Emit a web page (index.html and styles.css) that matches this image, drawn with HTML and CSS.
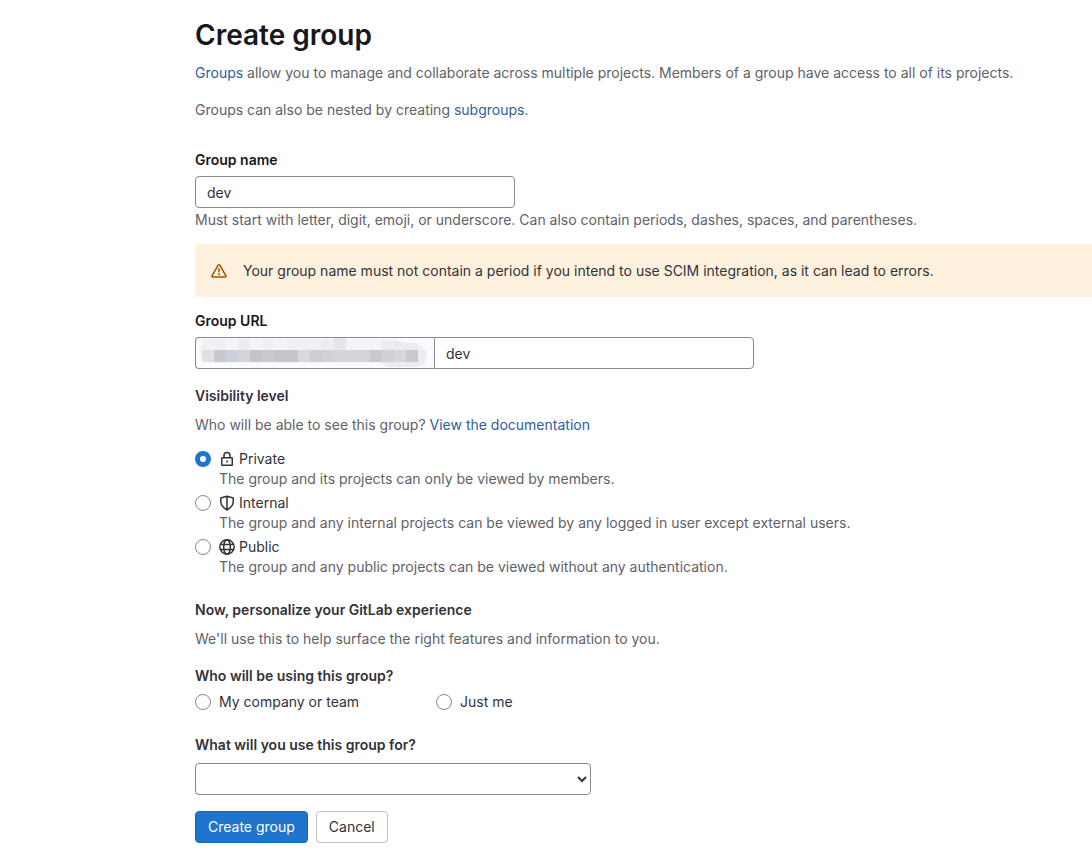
FILE: index.html
```html
<!DOCTYPE html>
<html lang="en">
<head>
<meta charset="utf-8">
<meta name="viewport" content="width=device-width, initial-scale=1">
<title>Create group</title>
<link rel="stylesheet" href="styles.css">
</head>
<body>
<main class="page">
  <header class="intro">
    <h1 class="title">Create group</h1>
    <p class="lead"><a class="link" href="#groups">Groups</a> allow you to manage and collaborate across multiple projects. Members of a group have access to all of its projects.</p>
    <p class="lead">Groups can also be nested by creating <a class="link" href="#subgroups">subgroups</a>.</p>
  </header>
  <form class="form">
    <div class="field">
      <label class="label strong" for="name">Group name</label>
      <input class="control name-input" id="name" type="text" value="dev">
      <p class="help name-help">Must start with letter, digit, emoji, or underscore. Can also contain periods, dashes, spaces, and parentheses.</p>
    </div>
    <div class="alert" role="alert">
      <svg class="icon alert-icon" viewBox="0 0 16 16" aria-hidden="true">
        <path d="M7.13 2.2a1 1 0 0 1 1.74 0l6.1 10.6a.8.8 0 0 1-.7 1.2H1.73a.8.8 0 0 1-.7-1.2z" fill="none" stroke="currentColor" stroke-width="1.5" stroke-linejoin="round"/>
        <path d="M8 5.75v3" fill="none" stroke="currentColor" stroke-width="1.5" stroke-linecap="round"/>
        <circle cx="8" cy="11.25" r="1" fill="currentColor"/>
      </svg>
      <p class="alert-text">Your group name must not contain a period if you intend to use SCIM integration, as it can lead to errors.</p>
    </div>
    <div class="field">
      <label class="label strong" for="url">Group URL</label>
      <div class="input-group">
        <span class="prefix">
          <svg class="mosaic" viewBox="0 0 238 30" aria-hidden="true">
            <path d="M15 1H194C202 1 205 5 214 5C226 5 231 10 231 18C231 27 225 29 216 29H198C190 29 187 25 179 25H16C8 25 3 20 3 13S8 1 15 1Z" fill="#f4f3f7"/>
            <path d="M198 1Q202 4 212 5H222V12H231Q232 29 216 29H198Q190 29 186 26V24H222V12H198Z" fill="#ececf0"/>
            <path d="M6 1h24v11H6zM66 1h12v11H66zM90 1h36v11H90z" fill="#f1f0f4"/>
            <path d="M42 1h12v11H42zM126 1h12v11h-12z" fill="#ededf1"/>
            <path d="M138 0h12v12h-12z" fill="#e8e5ea"/>
            <path d="M186 3h18v9h-18z" fill="#ebeaee"/>
            <path d="M6 12h12v12H6z" fill="#e4dfe3"/>
            <path d="M18 12h12v12H18z" fill="#c9c8cc"/>
            <path d="M30 12h12v12H30z" fill="#cecdd4"/>
            <path d="M42 12h0.500v12H42z" fill="#cbd0dd"/>
            <path d="M30 12h12v12H30z" fill="#cbcfdd"/>
            <path d="M42 12h12v12H42z" fill="#d6d4d9"/>
            <path d="M54 12h12v12H54z" fill="#c6c4ca"/>
            <path d="M66 12h12v12H66z" fill="#cbc8d0"/>
            <path d="M78 12h24v12H78z" fill="#c6c5ca"/>
            <path d="M102 12h12v12h-12z" fill="#d9d8dc"/>
            <path d="M114 12h12v12h-12z" fill="#cecdd2"/>
            <path d="M126 12h12v12h-12z" fill="#d3d1d5"/>
            <path d="M138 12h36v12h-36z" fill="#d5d4d9"/>
            <path d="M174 12h12v12h-12z" fill="#c9cad0"/>
            <path d="M186 12h12v12h-12z" fill="#d0d0d5"/>
            <path d="M198 12h12v12h-12z" fill="#dad6d8"/>
            <path d="M210 12h12v12h-12z" fill="#c8cacf"/>
          </svg>
        </span>
        <input class="control url-input" id="url" type="text" value="dev">
      </div>
    </div>
    <fieldset class="fieldset visibility">
      <legend class="label">Visibility level</legend>
      <p class="help vis-help">Who will be able to see this group? <a class="link" href="#docs">View the documentation</a></p>
      <div class="option">
        <input class="radio" type="radio" name="visibility" id="private" checked>
        <label class="option-label" for="private">
          <svg class="icon" viewBox="0 0 16 16" fill="none" stroke="currentColor" stroke-width="1.5" aria-hidden="true"><rect x="2.750" y="6.750" width="10.500" height="7.500" rx=".5"/><path d="M5 6.500V4.500a3 3 0 0 1 6 0v2"/><path d="M8 9.500v2"/></svg>
          Private</label>
        <p class="help option-help">The group and its projects can only be viewed by members.</p>
      </div>
      <div class="option">
        <input class="radio" type="radio" name="visibility" id="internal">
        <label class="option-label" for="internal">
          <svg class="icon" viewBox="0 0 16 16" fill="none" stroke="currentColor" stroke-width="1.5" stroke-linejoin="round" aria-hidden="true"><path d="M8 1.200 14.250 3v3.500c0 3.500-2 6-6.250 8.500-4.250-2.500-6.250-5-6.250-8.500V3zM8 1.200V15"/></svg>
          Internal</label>
        <p class="help option-help">The group and any internal projects can be viewed by any logged in user except external users.</p>
      </div>
      <div class="option">
        <input class="radio" type="radio" name="visibility" id="public">
        <label class="option-label" for="public">
          <svg class="icon" viewBox="0 0 16 16" fill="none" stroke="currentColor" stroke-width="1.500" aria-hidden="true"><circle cx="8" cy="8" r="7.200"/><ellipse cx="8" cy="8" rx="3.300" ry="7.200"/><path d="M1.500 5.500h13M1.500 10.500h13"/></svg>
          Public</label>
        <p class="help option-help">The group and any public projects can be viewed without any authentication.</p>
      </div>
    </fieldset>
    <section class="personalize">
      <h2 class="label">Now, personalize your GitLab experience</h2>
      <p class="help">We'll use this to help surface the right features and information to you.</p>
    </section>
    <fieldset class="fieldset users">
      <legend class="label">Who will be using this group?</legend>
      <div class="choices">
        <div class="option"><input class="radio" type="radio" name="users" id="team"><label class="option-label" for="team">My company or team</label></div>
        <div class="option"><input class="radio" type="radio" name="users" id="me"><label class="option-label" for="me">Just me</label></div>
      </div>
    </fieldset>
    <div class="field purpose">
      <label class="label" for="purpose">What will you use this group for?</label>
      <div class="select-wrap">
        <select class="control select" id="purpose"><option></option></select>
        <svg class="chevron" viewBox="0 0 10 8" aria-hidden="true"><path d="M1 2l4 4 4-4" fill="none" stroke="currentColor" stroke-width="2"/></svg>
      </div>
    </div>
    <div class="actions">
      <button class="button primary" type="submit">Create group</button>
      <button class="button" type="button">Cancel</button>
    </div>
  </form>
</main>
</body>
</html>
```
FILE: styles.css
```css
* { box-sizing: border-box; }
body {
  margin: 0;
  background: #fff;
  color: #333238;
  font: 14px/20px Inter, "Noto Sans", sans-serif;
}
h1, h2, p { margin: 0; }
.page { padding: 17px 0 10px 195px; }
.title { font-size: 28px; line-height: 36px; font-weight: 600; color: #18171d; }
.intro { display: flex; flex-direction: column; }
.lead { color: #626168; padding-top: 10px; }
.lead + .lead { padding-top: 17px; }
.link { color: #2f5ca0; text-decoration: none; }
.link:hover { text-decoration: underline; }
.form { padding-top: 30px; }
.field { display: flex; flex-direction: column; align-items: flex-start; gap: 6px; }
.label { display: block; padding: 0; font-size: 14px; line-height: 20px; font-weight: 600; color: #333238; }
.strong { color: #18171d; }
.help { color: #626168; }
.control {
  height: 32px;
  padding: 0 11px;
  border: 1px solid #89888d;
  border-radius: 4px;
  background: #fff;
  color: #333238;
  font: inherit;
}
.name-input { width: 100%; max-width: 320px; }
.name-help { margin-top: -4px; }
.alert {
  display: flex;
  gap: 16px;
  align-items: center;
  margin: 14px 0;
  padding: 16px;
  min-height: 53px;
  border-radius: 4px 0 0 4px;
  background: #fdf1dd;
}
.icon { flex: none; width: 16px; height: 16px; }
.alert-icon { color: #9e5400; }
.input-group { display: flex; width: 100%; max-width: 559px; }
.prefix {
  flex: 0 0 239px;
  border: 1px solid #89888d;
  border-right: 0;
  border-radius: 4px 0 0 4px;
  background: #fbfafd;
}
.mosaic { display: block; width: 238px; height: 30px; }
.url-input { flex: 1; min-width: 0; border-radius: 0 4px 4px 0; }
.fieldset { min-width: 0; margin: 0; padding: 0; border: 0; }
.visibility { margin-top: 17px; }
.vis-help { padding: 9px 0 14px; }
.option { display: grid; grid-template-columns: 16px auto; column-gap: 8px; align-items: center; justify-content: start; }
.visibility .option + .option { margin-top: 4px; }
.option-label { display: flex; align-items: center; gap: 4px; }
.option-help { grid-column: 2; }
.radio {
  appearance: none;
  width: 16px;
  height: 16px;
  margin: 0;
  border: 1px solid #89888d;
  border-radius: 50%;
  background: #fff;
}
.radio:checked { border: 5px solid #1f75cb; }
.personalize { display: flex; flex-direction: column; gap: 9px; margin-top: 23px; }
.users { margin-top: 17px; }
.choices { display: grid; grid-template-columns: 233px auto; column-gap: 8px; padding-top: 6px; }
.purpose { gap: 8px; margin-top: 23px; }
.select-wrap { position: relative; width: 100%; max-width: 396px; }
.select { appearance: none; display: block; width: 100%; }
.chevron { position: absolute; right: 4px; top: 12px; width: 10px; height: 8px; pointer-events: none; }
.actions { display: flex; gap: 8px; margin-top: 16px; }
.button {
  height: 32px;
  padding: 0 12px;
  border: 1px solid #bfbfc3;
  border-radius: 4px;
  background: #fff;
  color: #333238;
  font: inherit;
}
.primary { border-color: #1068bf; background: #1f75cb; color: #fff; }
```
